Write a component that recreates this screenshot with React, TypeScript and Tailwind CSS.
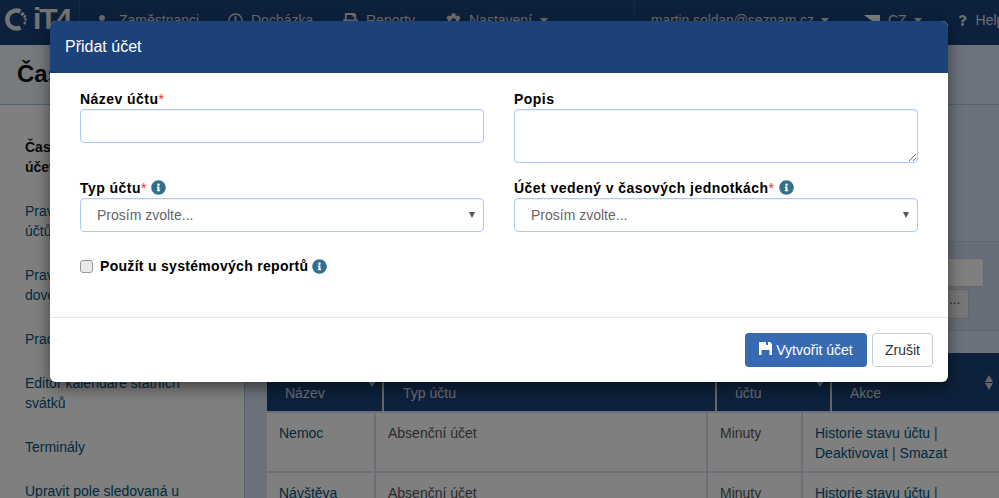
import React from "react";
import { FaUser, FaPrint, FaCog, FaQuestion, FaInfoCircle, FaRegClock } from "react-icons/fa";

const Info = () => <FaInfoCircle className="inline-block text-[15px] text-[#31708f] align-[-2px]" />;
const Req = () => <span className="text-[#ff2020] font-normal text-[14px] leading-none">*</span>;
const Caret = () => <span className="block w-0 h-0 border-x-[4px] border-x-transparent border-t-[5px] border-t-[#ddd]" />;

function Logo() {
  return (
    <div className="w-[80px] shrink-0 flex items-center pl-[5px] gap-[5px] pb-[7px] border-r border-[#2a5596]">
      <svg width="23" height="23" viewBox="0 0 23 23" className="shrink-0">
        <path d="M15.5 3.5A9 9 0 1 0 15.5 19.5" fill="none" stroke="#e8e8e8" strokeWidth="4.5" />
        <g fill="none" stroke="#e8e8e8" strokeWidth="4">
          <path d="M16.5 5.2L18.5 7" strokeWidth="3.6" />
          <path d="M18.8 8.2L20.6 9.2" strokeWidth="3.2" />
          <path d="M19.6 11.5L21.6 11.5" strokeWidth="2.6" />
          <path d="M18.8 14.6L20.6 15.6" strokeWidth="2.6" />
        </g>
      </svg>
      <span className="text-[30px] leading-none font-bold tracking-[-2px] text-[#e8e8e8]">iT4</span>
    </div>
  );
}

function NavItem({ icon, label, w }: { icon: React.ReactNode; label: string; w: string }) {
  return (
    <div className={`flex items-center ${w}`}>
      <span className="w-[23px] flex shrink-0">{icon}</span>
      <span>{label}</span>
    </div>
  );
}

function Nav() {
  return (
    <div className="h-[45px] bg-[#1b4279] flex text-[#dcdcdc] text-[14px] shrink-0 overflow-hidden">
      <Logo />
      <div className="flex items-center pl-[16px] pb-[4px] w-[555px] shrink-0 border-r border-[#2a5596]">
        <NavItem w="w-[132px]" icon={<FaUser className="text-[12px]" />} label="Zaměstnanci" />
        <NavItem w="w-[115px]" icon={<FaRegClock className="text-[15px]" />} label="Docházka" />
        <NavItem w="w-[103px]" icon={<FaPrint className="text-[15px]" />} label="Reporty" />
        <NavItem w="w-[94px]" icon={<FaCog className="text-[15px]" />} label="Nastavení" />
        <Caret />
      </div>
      <div className="flex-1 flex items-center pl-[16px] pb-[4px] whitespace-nowrap">
        <span className="tracking-[-0.1px]">martin.soldan@seznam.cz</span>
        <span className="ml-[7px] mr-[35px]"><Caret /></span>
        <svg width="16" height="12" viewBox="0 0 16 12" className="mr-[8px] shrink-0">
          <rect width="16" height="6" fill="#fff" />
          <rect y="6" width="16" height="6" fill="#d7141a" />
          <path d="M0 0L8 6L0 12Z" fill="#11457e" />
        </svg>
        <span>CZ</span>
        <span className="ml-[7px] mr-[35px]"><Caret /></span>
        <FaQuestion className="text-[11px] mr-[8px] shrink-0" />
        <span>Help</span>
      </div>
    </div>
  );
}

function Sidebar() {
  return (
    <div className="w-[245px] shrink-0 bg-white border-r border-[#a8c4e8] pt-[32px] pl-[25px] pr-[50px] text-[14px] leading-[20px] text-[#005580]">
      <div className="flex flex-col gap-[24px]">
        <div className="w-[110px] font-bold text-[#111]">Časové účetnictví</div>
        <div className="w-[40px]">Pravidla účtů</div>
        <div className="w-[40px]">Pravidla dovolené</div>
        <div className="whitespace-nowrap">Pracovní doba</div>
        <div>Editor kalendáře státních svátků</div>
        <div>Terminály</div>
        <div>Upravit pole sledovaná u</div>
      </div>
    </div>
  );
}

function Th({ w, label, caret, pl }: { w: string; label: string; caret?: boolean; pl: string }) {
  return (
    <div className={`${w} ${pl} relative border-r-2 border-[#cfcfcf] pt-[30px] leading-[20px]`}>
      {label}
      {caret && <span className="absolute right-[5px] top-[27px] w-0 h-0 border-x-[5px] border-x-transparent border-t-[7px] border-t-[#ccc]" />}
    </div>
  );
}

function Row({ name }: { name: string }) {
  return (
    <div className="flex h-[60px] text-[14px] leading-[20px] text-[#555] shrink-0 border-b-2 border-[#d4e0f2]">
      <div className="w-[109px] pl-[12px] pt-[10px] border-r-2 border-[#d4e0f2] text-[#005580]">{name}</div>
      <div className="w-[332px] pl-[12px] pt-[10px] border-r-2 border-[#d4e0f2]">Absenční účet</div>
      <div className="w-[95px] pl-[12px] pt-[10px] border-r-2 border-[#d4e0f2]">Minuty</div>
      <div className="flex-1 pl-[12px] pt-[10px]">
        <span className="text-[#005580]">Historie stavu účtu</span> | <br />
        <span className="text-[#005580]">Deaktivovat</span> | <span className="text-[#005580]">Smazat</span>
      </div>
    </div>
  );
}

function Content() {
  return (
    <div className="flex-1 bg-[#d6e4f6] pl-[22px] min-w-0">
      <div className="h-[249px] flex flex-col">
        <div className="h-[136px]" />
        <div className="h-[90px] bg-[#ccdcf4] border-y border-[#b8d0f0] flex flex-col items-end pt-[16px] pr-[15px] gap-[2px] box-border">
          <div className="w-[38px] h-[29px] bg-white rounded-[3px] border border-[#ccc]" />
          <div className="w-[38px] h-[30px] bg-[#eee] rounded-[3px] border border-[#ccc] mr-[15px] text-[#333] text-[13px] text-right pr-[8px]">...</div>
        </div>
      </div>
      <div className="h-[58px] bg-[#1b4279] flex text-[14px] text-[#dcdcdc] mt-[-1px]">
        <Th w="w-[117px]" pl="pl-[18px]" label="Název" caret />
        <Th w="w-[333px]" pl="pl-[19px]" label="Typ účtu" />
        <Th w="w-[115px]" pl="pl-[18px]" label="účtu" caret />
        <div className="flex-1 relative pl-[18px] pt-[30px] leading-[20px]">
          Akce
          <span className="absolute right-[6px] top-[22px] flex flex-col gap-[1px]">
            <span className="w-0 h-0 border-x-[4px] border-x-transparent border-b-[7px] border-b-[#ccc]" />
            <span className="w-0 h-0 border-x-[4px] border-x-transparent border-t-[7px] border-t-[#ccc]" />
          </span>
        </div>
      </div>
      <div className="bg-white border-t-2 border-[#d4e0f2] flex flex-col">
        <Row name="Nemoc" />
        <Row name="Návštěva" />
      </div>
    </div>
  );
}

function Field({ label, children }: { label: React.ReactNode; children: React.ReactNode }) {
  return (
    <div className="w-[404px]">
      <div className="h-[20px] font-bold text-[14px] tracking-[0.45px] leading-[20px] text-black">{label}</div>
      {children}
    </div>
  );
}

function SelectBox() {
  return (
    <div className="h-[34px] w-full border border-[#a9cbf5] rounded-[4px] flex items-center justify-between pl-[16px] pr-[8px] text-[14px] text-[#666] shadow-[inset_0_1px_1px_rgba(0,0,0,0.06)]">
      <span>Prosím zvolte...</span>
      <span className="w-0 h-0 border-x-[3.5px] border-x-transparent border-t-[6px] border-t-[#555]" />
    </div>
  );
}

function Modal() {
  return (
    <div className="absolute left-[50px] top-[21px] w-[898px] h-[361px] bg-white rounded-[6px] shadow-[0_5px_15px_rgba(0,0,0,0.5)] flex flex-col overflow-hidden">
      <div className="h-[52px] bg-[#1b4279] shrink-0 flex items-center pl-[15px] text-[16px] text-white">Přidat účet</div>
      <div className="h-[245px] shrink-0 border-b border-[#e5e5e5] pt-[16px] px-[30px]">
        <div className="flex justify-between">
          <Field label={<>Název účtu<Req /></>}>
            <div className="h-[34px] border border-[#a9cbf5] rounded-[4px] shadow-[inset_0_1px_1px_rgba(0,0,0,0.06)]" />
          </Field>
          <Field label="Popis">
            <textarea className="block w-full h-[54px] border border-[#a9cbf5] rounded-[4px] shadow-[inset_0_1px_1px_rgba(0,0,0,0.06)] outline-none" />
          </Field>
        </div>
        <div className="flex justify-between mt-[15px]">
          <Field label={<>Typ účtu<Req /> <Info /></>}>
            <SelectBox />
          </Field>
          <Field label={<>Účet vedený v časových jednotkách<Req /> <Info /></>}>
            <SelectBox />
          </Field>
        </div>
        <div className="flex items-center mt-[24px] h-[20px] font-bold text-[14px] tracking-[0.3px] text-black">
          <span className="w-[13px] h-[13px] rounded-[3px] border border-[#9a9a9a] bg-[#e9e9e9] mr-[7px] shrink-0" />
          <span>Použít u systémových reportů</span>
          <span className="ml-[4px] flex"><Info /></span>
        </div>
      </div>
      <div className="flex-1 flex justify-end items-start pt-[15px] pr-[15px] gap-[5px] text-[14px]">
        <div className="h-[34px] w-[122px] rounded-[4px] bg-[#386ab3] text-white flex items-center justify-center gap-[4px]">
          <svg width="13" height="13" viewBox="0 0 13 13" className="mb-[3px] shrink-0">
            <path fill="#fff" d="M0 0h11l2 2v11H0z" />
            <rect x="7" y="0" width="2" height="3" fill="#386ab3" />
            <rect x="2.5" y="8" width="8" height="5" fill="#386ab3" />
          </svg>
          <span>Vytvořit účet</span>
        </div>
        <div className="h-[34px] w-[61px] rounded-[4px] border border-[#ccc] text-[#333] flex items-center justify-center">Zrušit</div>
      </div>
    </div>
  );
}

export default function App() {
  return (
    <div className="relative w-[999px] h-[498px] overflow-hidden bg-white font-['Liberation_Sans',Arial,sans-serif]">
      <div className="flex flex-col h-full">
        <Nav />
        <div className="h-[60px] shrink-0 bg-[linear-gradient(90deg,#f0f6ff_0%,#d6e6f8_30%)] border-b border-[#a8c4e8] flex items-center pl-[17px] text-[24px] font-bold text-[#111] pb-[2px]">
          Časové účty
        </div>
        <div className="flex flex-1 min-h-0">
          <Sidebar />
          <Content />
        </div>
      </div>
      <div className="absolute inset-0 bg-black/50" />
      <Modal />
    </div>
  );
}
